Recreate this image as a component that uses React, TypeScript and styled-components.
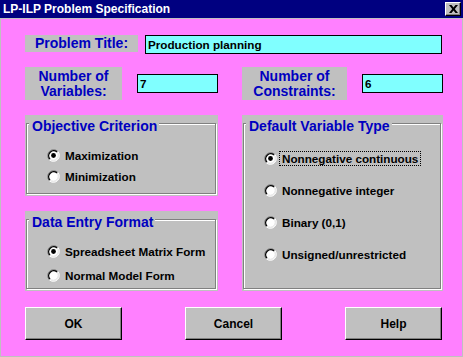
import React from "react";
import styled, { createGlobalStyle } from "styled-components";

const GRAY = "#c0c0c0";
const PINK = "#ff80ff";
const CYAN = "#80ffff";
const BLUE = "#0000c0";
const NAVY = "#000080";

const Global = createGlobalStyle`
  html, body { margin: 0; padding: 0; background: #ffffff; }
  body { font-family: "Liberation Sans", Arial, sans-serif; }
  * { box-sizing: border-box; }
`;

const Window = styled.div`
  width: 463px;
  height: 357px;
  display: flex;
  flex-direction: column;
  background: ${PINK};
`;

const TitleBar = styled.div`
  height: 18px;
  flex: none;
  background: ${NAVY};
  display: flex;
  align-items: center;
  justify-content: space-between;
  padding: 0 1px 0 3px;
`;

const TitleText = styled.span`
  color: #ffffff;
  font-weight: bold;
  font-size: 12px;
  line-height: 14px;
  white-space: nowrap;
`;

const CloseButton = styled.div`
  width: 16px;
  height: 14px;
  background: ${GRAY};
  border-top: 1px solid #ffffff;
  border-left: 1px solid #ffffff;
  border-right: 1px solid #000000;
  border-bottom: 1px solid #000000;
  box-shadow: inset -1px -1px 0 #808080;
  display: flex;
  align-items: center;
  justify-content: center;
  margin-right: 1px;
`;

const Body = styled.div`
  flex: 1;
  border: 1px solid ${GRAY};
  padding: 16px 20px 0 24px;
  display: flex;
  flex-direction: column;
`;

const TitleRow = styled.div`
  display: flex;
  align-items: flex-start;
  gap: 7px;
`;

const Label = styled.div<{ $w: number; $h: number }>`
  width: ${(p) => p.$w}px;
  height: ${(p) => p.$h}px;
  flex: none;
  background: ${GRAY};
  color: ${BLUE};
  font-weight: bold;
  font-size: 14px;
  line-height: 15px;
  text-align: center;
  display: flex;
  align-items: center;
  justify-content: center;
`;

const Field = styled.input<{ $w: number }>`
  width: ${(p) => p.$w}px;
  height: 19px;
  flex: none;
  background: ${CYAN};
  border: 1px solid #000000;
  padding: 0 0 0 2px;
  margin: 0;
  font-family: "Liberation Sans", Arial, sans-serif;
  font-weight: bold;
  font-size: 11.7px;
  color: #000000;
  outline: none;
`;

const Grid = styled.div<{ $mt: number }>`
  display: grid;
  grid-template-columns: 193px 201px;
  column-gap: 24px;
  margin-top: ${(p) => p.$mt}px;
`;

const Pair = styled.div`
  display: flex;
  align-items: center;
  gap: 15px;
`;

const Column = styled.div`
  display: flex;
  flex-direction: column;
  gap: 15px;
`;

const GroupBox = styled.div<{ $h: number }>`
  height: ${(p) => p.$h}px;
  background: ${GRAY};
  padding: 8px 2px 2px 1px;
  display: flex;
`;

const Frame = styled.div`
  flex: 1;
  display: flex;
  flex-direction: column;
  border: 1px solid #808080;
  box-shadow: 1px 1px 0 #ffffff, inset 1px 1px 0 #ffffff;
`;

const Caption = styled.span`
  align-self: flex-start;
  margin: -5px 0 0 2px;
  padding: 0 2px 0 3px;
  background: ${GRAY};
  color: ${BLUE};
  font-weight: bold;
  font-size: 14px;
  line-height: 14px;
  white-space: nowrap;
`;

const Options = styled.div<{ $mt: number; $gap: number }>`
  display: flex;
  flex-direction: column;
  gap: ${(p) => p.$gap}px;
  margin-top: ${(p) => p.$mt}px;
  padding-left: 21px;
`;

const OptionRow = styled.div`
  display: flex;
  align-items: center;
  gap: 2px;
  height: 15px;
`;

const RadioSvg = styled.svg`
  width: 13px;
  height: 13px;
  flex: none;
  display: block;
  margin-left: -1px;
`;

const OptionText = styled.span<{ $focus?: boolean }>`
  border: 1px dotted ${(p) => (p.$focus ? "#000000" : "transparent")};
  padding: 0 2px;
  font-weight: bold;
  font-size: 11.7px;
  line-height: 13px;
  color: #000000;
  white-space: nowrap;
`;

const ButtonRow = styled.div`
  display: flex;
  justify-content: space-between;
  margin-top: 16px;
`;

const Button = styled.button`
  width: 97px;
  height: 33px;
  background: ${GRAY};
  border: 1px solid #000000;
  border-top-color: #ffffff;
  border-left-color: #ffffff;
  box-shadow: inset -1px -1px 0 #808080;
  font-family: "Liberation Sans", Arial, sans-serif;
  font-weight: bold;
  font-size: 12px;
  color: #000000;
  padding: 0;
`;

const Radio = ({ on }: { on?: boolean }) => (
  <RadioSvg viewBox="0 0 13 13">
    <circle cx="6.5" cy="6.5" r="5.5" fill="#ffffff" />
    <path d="M2.26 10.74A6 6 0 0 1 10.74 2.26" fill="none" stroke="#808080" strokeWidth="1" />
    <path d="M10.74 2.26A6 6 0 0 1 2.26 10.74" fill="none" stroke="#ffffff" strokeWidth="1" />
    <path d="M2.97 10.03A5 5 0 0 1 10.03 2.97" fill="none" stroke="#000000" strokeWidth="1.4" />
    <path d="M10.03 2.97A5 5 0 0 1 2.97 10.03" fill="none" stroke="#dfdfdf" strokeWidth="1" />
    {on && <circle cx="6.5" cy="6.5" r="2.4" fill="#000000" />}
  </RadioSvg>
);

type Opt = { label: string; on?: boolean; focus?: boolean };

const Group = ({
  title,
  h,
  mt,
  gap,
  options,
}: {
  title: string;
  h: number;
  mt: number;
  gap: number;
  options: Opt[];
}) => (
  <GroupBox $h={h}>
    <Frame>
      <Caption>{title}</Caption>
      <Options $mt={mt} $gap={gap}>
        {options.map((o) => (
          <OptionRow key={o.label}>
            <Radio on={o.on} />
            <OptionText $focus={o.focus}>{o.label}</OptionText>
          </OptionRow>
        ))}
      </Options>
    </Frame>
  </GroupBox>
);

export default function App() {
  return (
    <>
      <Global />
      <Window>
        <TitleBar>
          <TitleText>LP-ILP Problem Specification</TitleText>
          <CloseButton>
            <svg width="9" height="8" viewBox="0 0 9 8">
              <path d="M0 0h2.5L4.5 2.5 6.5 0H9L5.8 4 9 8H6.5L4.5 5.5 2.5 8H0l3.2-4z" fill="#000" />
            </svg>
          </CloseButton>
        </TitleBar>
        <Body>
          <TitleRow>
            <Label $w={113} $h={17}>Problem Title:</Label>
            <Field $w={297} defaultValue="Production planning" readOnly />
          </TitleRow>
          <Grid $mt={13}>
            <Pair>
              <Label $w={97} $h={33}>
                Number of
                <br />
                Variables:
              </Label>
              <Field $w={81} defaultValue="7" readOnly />
            </Pair>
            <Pair>
              <Label $w={105} $h={33}>
                Number of
                <br />
                Constraints:
              </Label>
              <Field $w={81} defaultValue="6" readOnly />
            </Pair>
          </Grid>
          <Grid $mt={15}>
            <Column>
              <Group
                title="Objective Criterion"
                h={81}
                mt={15}
                gap={6}
                options={[{ label: "Maximization", on: true }, { label: "Minimization" }]}
              />
              <Group
                title="Data Entry Format"
                h={80}
                mt={15}
                gap={9}
                options={[{ label: "Spreadsheet Matrix Form", on: true }, { label: "Normal Model Form" }]}
              />
            </Column>
            <Group
              title="Default Variable Type"
              h={176}
              mt={18}
              gap={17}
              options={[
                { label: "Nonnegative continuous", on: true, focus: true },
                { label: "Nonnegative integer" },
                { label: "Binary (0,1)" },
                { label: "Unsigned/unrestricted" },
              ]}
            />
          </Grid>
          <ButtonRow>
            <Button>OK</Button>
            <Button>Cancel</Button>
            <Button>Help</Button>
          </ButtonRow>
        </Body>
      </Window>
    </>
  );
}
